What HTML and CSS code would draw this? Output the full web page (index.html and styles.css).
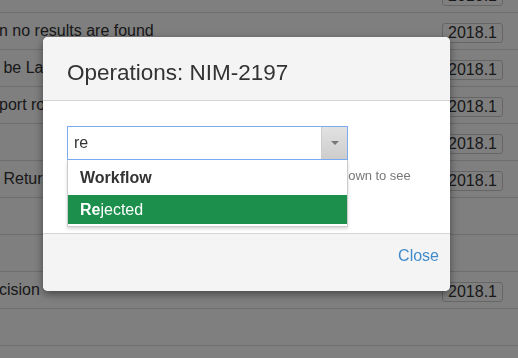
FILE: index.html
```html
<!DOCTYPE html>
<html lang="en">
<head>
  <meta charset="UTF-8">
  <meta name="viewport" content="width=device-width, initial-scale=1.0">
  <title>Operations</title>
  <link rel="stylesheet" href="styles.css">
</head>
<body>
  <div class="page">
    <div class="rows">
      <div class="row"><span class="row-title"></span><span class="label">2018.1</span></div>
      <div class="row"><span class="row-title">n no results are found</span><span class="label">2018.1</span></div>
      <div class="row"><span class="row-title">&nbsp;be Latest version</span><span class="label">2018.1</span></div>
      <div class="row"><span class="row-title">port roles list</span><span class="label">2018.1</span></div>
      <div class="row"><span class="row-title"></span><span class="label">2018.1</span></div>
      <div class="row"><span class="row-title">&nbsp;Return to list</span><span class="label">2018.1</span></div>
      <div class="row"><span class="row-title"></span></div>
      <div class="row"><span class="row-title"></span></div>
      <div class="row"><span class="row-title">cision</span><span class="label">2018.1</span></div>
      <div class="row"><span class="row-title"></span></div>
      <div class="row"><span class="row-title"></span></div>
    </div>
  </div>

  <div class="backdrop"></div>

  <div class="modal">
    <div class="modal-header">
      <h4 class="modal-title">Operations: NIM-2197</h4>
    </div>
    <div class="modal-body">
      <div class="combo">
        <div class="combo-input">
          <span class="combo-text">re</span>
          <span class="combo-arrow"></span>
        </div>
        <ul class="combo-menu">
          <li class="combo-group">Workflow</li>
          <li class="combo-option is-active"><b>Re</b>jected</li>
        </ul>
      </div>
      <p class="help-text">Start typing to filter the states, or scroll the drop down to see more.</p>
    </div>
    <div class="modal-footer">
      <a class="btn-link" href="#">Close</a>
    </div>
  </div>
</body>
</html>
```

FILE: styles.css
```css
:root {
  --text: #333;
  --muted: #777;
  --line: #ddd;
  --panel: #f4f4f4;
  --panel-line: #d4d4d4;
  --link: #428bca;
  --focus: #7aabf0;
  --active: #1b8f4b;
}

* {
  margin: 0;
  padding: 0;
  box-sizing: border-box;
}

body {
  font-family: 'Liberation Sans', Arial, sans-serif;
  color: var(--text);
  background: #fff;
  overflow: hidden;
  height: 100vh;
}

/* page behind the dialog */
.page {
  height: 100vh;
  overflow: hidden;
}

.rows {
  margin-top: -25px;
}

.row {
  display: flex;
  align-items: flex-start;
  height: 37px;
  border-top: 1px solid var(--line);
  padding: 0 15px 0 0;
  font-size: 16px;
}

.row-title {
  flex: 1;
  white-space: nowrap;
  overflow: hidden;
  line-height: 20px;
  margin-top: 8px;
  margin-left: -1px;
}

.label {
  margin-top: 10px;
  border: 1px solid #ccc;
  border-radius: 3px;
  padding: 0 5px;
  line-height: 18px;
  font-size: 16px;
  background: #fff;
}

.backdrop {
  position: fixed;
  inset: 0;
  background: rgba(0, 0, 0, 0.5);
}

/* dialog */
.modal {
  position: absolute;
  top: 37px;
  left: 43px;
  width: 407px;
  background: #fff;
  border-radius: 5px;
  box-shadow: 0 3px 9px rgba(0, 0, 0, 0.45);
  overflow: hidden;
}

.modal-header {
  background: var(--panel);
  border-bottom: 1px solid var(--panel-line);
  padding: 23px 24px 15px;
}

.modal-title {
  font-size: 22.5px;
  font-weight: normal;
  line-height: 25px;
}

.modal-body {
  height: 132px;
  padding: 25px 24px 0;
}

.combo {
  position: relative;
  width: 281px;
}

.combo-input {
  display: flex;
  height: 34px;
  border: 1px solid var(--focus);
  background: #fff;
}

.combo-text {
  flex: 1;
  padding-left: 6px;
  font-size: 16px;
  line-height: 32px;
}

.combo-arrow {
  width: 26px;
  display: flex;
  align-items: center;
  justify-content: center;
  border-left: 1px solid #ccc;
  background: linear-gradient(#e2e2e2, #cdcdcd);
}

.combo-arrow::after {
  content: "";
  border-top: 4px solid #777;
  border-left: 4px solid transparent;
  border-right: 4px solid transparent;
}

.combo-menu {
  position: absolute;
  top: 100%;
  left: 0;
  right: 0;
  list-style: none;
  background: #fff;
  border: 1px solid #ccc;
  border-top: 0;
  padding-bottom: 2px;
  box-shadow: 0 2px 3px rgba(0, 0, 0, 0.15);
  z-index: 2;
  font-size: 16px;
  line-height: 19px;
}

.combo-group {
  padding: 8px 12px;
  font-weight: bold;
}

.combo-option {
  padding: 5px 12px;
}

.combo-option.is-active {
  background: var(--active);
  color: #fff;
}

.help-text {
  margin-top: 7px;
  font-size: 13px;
  line-height: 18px;
  word-spacing: -0.2px;
  color: var(--muted);
}

.modal-footer {
  height: 58px;
  background: var(--panel);
  border-top: 1px solid var(--panel-line);
  padding: 12px 11px;
  text-align: right;
  line-height: 20px;
}

.btn-link {
  font-size: 16px;
  color: var(--link);
  text-decoration: none;
}
```
